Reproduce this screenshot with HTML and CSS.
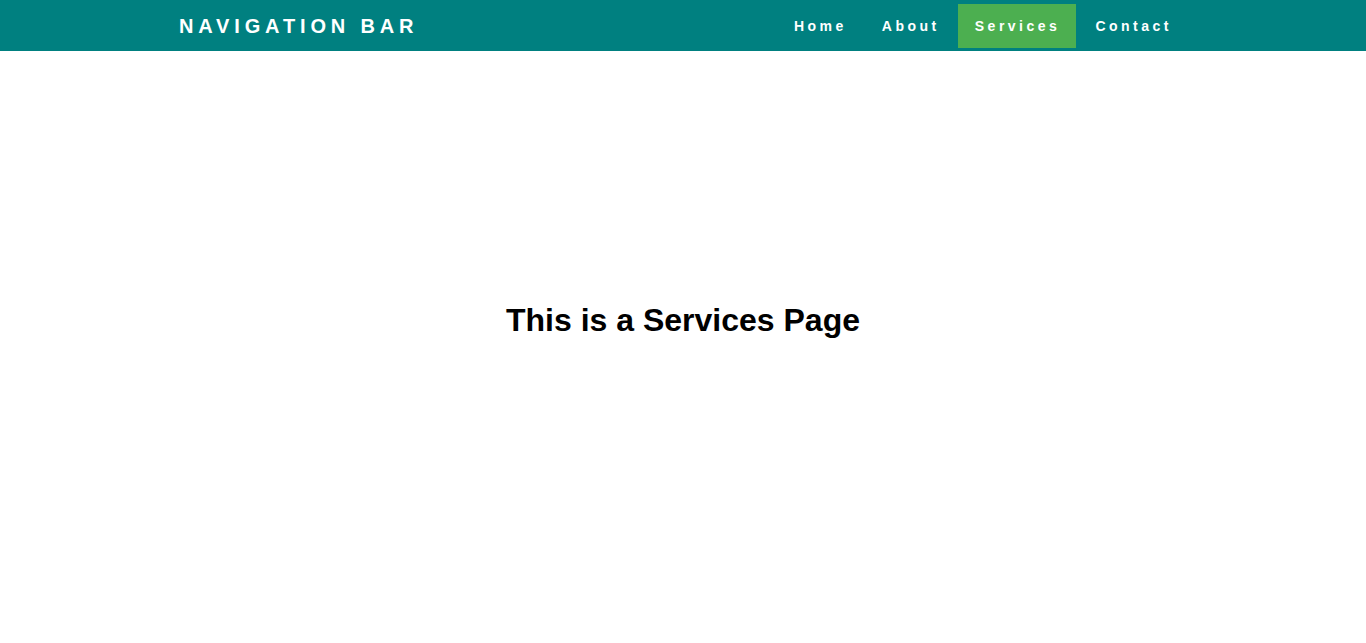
FILE: index.html
```html
<!DOCTYPE html>
<html>
<head>
<meta charset="utf-8">
<link rel="stylesheet" href="styles.css">
</head>
<body>
<nav class="navbar">
  <div class="container">
    <div class="brand">NAVIGATION BAR</div>
    <ul class="menu">
      <li><a href="#">Home</a></li>
      <li><a href="#">About</a></li>
      <li><a href="#" class="active">Services</a></li>
      <li><a href="#">Contact</a></li>
    </ul>
  </div>
</nav>
<main class="content">
  <h1>This is a Services Page</h1>
</main>
</body>
</html>
```
FILE: styles.css
```css
* { box-sizing: border-box; }
html, body { margin: 0; padding: 0; }
body {
  font-family: "Liberation Sans", Arial, sans-serif;
  background: #fff;
  color: #000;
}
.navbar {
  background: #008080;
  height: 51px;
}
.container {
  width: 1008px;
  margin: 0 auto;
  height: 100%;
  display: flex;
  align-items: center;
  justify-content: space-between;
}
.brand {
  color: #fff;
  font-weight: bold;
  font-size: 20px;
  letter-spacing: 4.85px;
  padding-top: 2px;
}
.menu {
  list-style: none;
  margin: 0 -1px 0 0;
  padding: 0;
  display: flex;
  gap: 2px;
}
.menu a {
  display: block;
  color: #fff;
  text-decoration: none;
  font-weight: bold;
  font-size: 14px;
  letter-spacing: 3.5px;
  padding: 14px 16px 14px 17px;
  line-height: 16px;
}
.menu a.active {
  background: #4caf50;
}
.content {
  height: 539px;
  display: flex;
  align-items: center;
  justify-content: center;
}
.content h1 {
  margin: 0;
  font-size: 32px;
  font-weight: bold;
}
```
